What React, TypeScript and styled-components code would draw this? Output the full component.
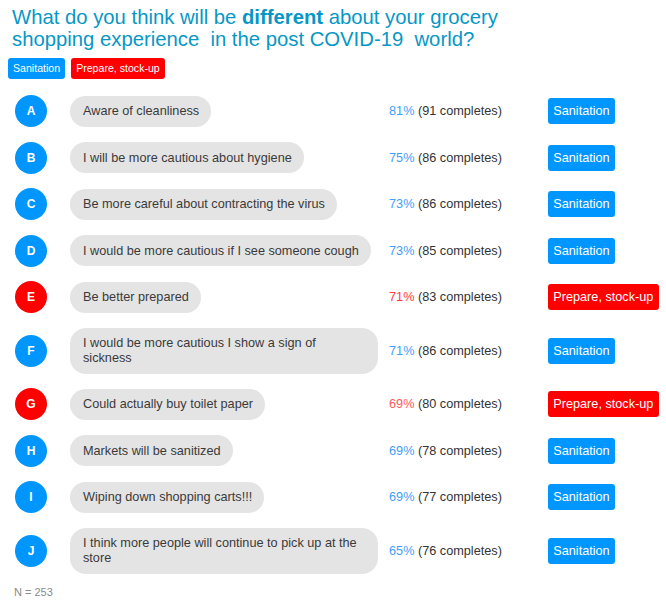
import React from "react";
import styled, { createGlobalStyle } from "styled-components";

const GlobalStyle = createGlobalStyle`
  html, body { margin: 0; padding: 0; background: #ffffff; }
  body { font-family: "Liberation Sans", Arial, sans-serif; }
`;

const BLUE = "#0096ff";
const RED = "#ff0000";

type Kind = "san" | "prep";

const Page = styled.div`
  padding: 7px 0 0 0;
  width: 666px;
  box-sizing: border-box;
  font-family: "Liberation Sans", Arial, sans-serif;
`;

const Title = styled.h1`
  margin: 0 0 0 12px;
  font-size: 20.3px;
  line-height: 21.5px;
  font-weight: normal;
  color: #0797c6;
  white-space: pre;
  b { font-weight: bold; }
`;

const Legend = styled.div`
  display: flex;
  gap: 6px;
  margin: 8px 0 0 8px;
`;

const LegendBadge = styled.span<{ $kind: Kind }>`
  display: inline-block;
  height: 21px;
  line-height: 21px;
  padding: 0 5px;
  font-size: 10.6px;
  color: #fff;
  border-radius: 3px;
  background: ${(p) => (p.$kind === "san" ? BLUE : RED)};
`;

const List = styled.div`
  display: flex;
  flex-direction: column;
  gap: 14.5px;
  margin-top: 16px;
`;

const Row = styled.div`
  display: flex;
  align-items: center;
  padding-left: 15px;
`;

const Circle = styled.div<{ $kind: Kind }>`
  width: 32px;
  height: 32px;
  border-radius: 50%;
  flex-shrink: 0;
  margin-right: 23px;
  display: flex;
  align-items: center;
  justify-content: center;
  color: #fff;
  font-weight: bold;
  font-size: 12px;
  background: ${(p) => (p.$kind === "san" ? BLUE : RED)};
`;

const BubbleCell = styled.div`
  width: 319px;
  flex-shrink: 0;
  display: flex;
  align-items: center;
`;

const Bubble = styled.div`
  box-sizing: border-box;
  max-width: 308px;
  padding: 8.5px 12px 7.5px 13px;
  line-height: 15px;
  font-size: 12.7px;
  color: #3a3a3a;
  background: #e4e4e4;
  border-radius: 16px;
`;

const PctCell = styled.div`
  width: 159px;
  flex-shrink: 0;
  font-size: 12.7px;
  line-height: 15px;
  padding-top: 1px;
  color: #333;
`;

const Pct = styled.span<{ $color: string }>`
  color: ${(p) => p.$color};
`;

const Badge = styled.span<{ $kind: Kind }>`
  display: block;
  height: 26px;
  line-height: 26px;
  padding: 0 5.25px;
  font-size: 12.7px;
  color: #fff;
  border-radius: 3px;
  background: ${(p) => (p.$kind === "san" ? BLUE : RED)};
`;

const Footer = styled.div`
  margin: 12px 0 0 14px;
  font-size: 11px;
  line-height: 13px;
  color: #8a8a8a;
`;

type Item = { l: string; t: string; p: number; n: number; k: Kind };

const items: Item[] = [
  { l: "A", t: "Aware of cleanliness", p: 81, n: 91, k: "san" },
  { l: "B", t: "I will be more cautious about hygiene", p: 75, n: 86, k: "san" },
  { l: "C", t: "Be more careful about contracting the virus", p: 73, n: 86, k: "san" },
  { l: "D", t: "I would be more cautious if I see someone cough", p: 73, n: 85, k: "san" },
  { l: "E", t: "Be better prepared", p: 71, n: 83, k: "prep" },
  { l: "F", t: "I would be more cautious I show a sign of sickness", p: 71, n: 86, k: "san" },
  { l: "G", t: "Could actually buy toilet paper", p: 69, n: 80, k: "prep" },
  { l: "H", t: "Markets will be sanitized", p: 69, n: 78, k: "san" },
  { l: "I", t: "Wiping down shopping carts!!!", p: 69, n: 77, k: "san" },
  { l: "J", t: "I think more people will continue to pick up at the store", p: 65, n: 76, k: "san" },
];

const pctColor = (it: Item) => {
  if (it.k === "prep") return it.p >= 70 ? "#ff3b3b" : "#ff5a5a";
  return "#3f9ef8";
};

export default function App() {
  return (
    <Page>
      <GlobalStyle />
      <Title>
        What do you think will be <b>different</b> about your grocery{"\n"}shopping experience  in the post COVID-19  world?
      </Title>
      <Legend>
        <LegendBadge $kind="san">Sanitation</LegendBadge>
        <LegendBadge $kind="prep">Prepare, stock-up</LegendBadge>
      </Legend>
      <List>
        {items.map((it) => (
          <Row key={it.l}>
            <Circle $kind={it.k}>{it.l}</Circle>
            <BubbleCell>
              <Bubble>{it.t}</Bubble>
            </BubbleCell>
            <PctCell>
              <Pct $color={pctColor(it)}>{it.p}%</Pct> ({it.n} completes)
            </PctCell>
            <Badge $kind={it.k}>{it.k === "san" ? "Sanitation" : "Prepare, stock-up"}</Badge>
          </Row>
        ))}
      </List>
      <Footer>N = 253</Footer>
    </Page>
  );
}
